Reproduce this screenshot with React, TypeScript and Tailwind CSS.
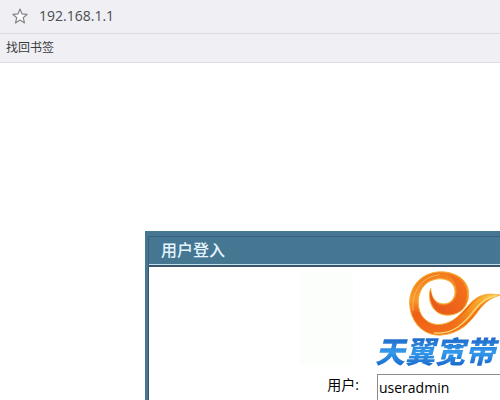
import { useState } from "react";

function AddressBar() {
  return (
    <header className="border-b border-[#dcdce2] bg-[#efeff4]">
      <div className="flex h-[34px] items-center gap-[7px] border-b border-[#dadae0] pb-px pl-2">
        <button type="button" aria-label="收藏" className="flex size-6 shrink-0 items-center justify-center">
          <svg
            viewBox="0 0 16 16"
            className="size-4"
            fill="#fcfcfc"
            stroke="#85858a"
            strokeWidth="1.2"
            strokeLinejoin="round"
          >
            <path d="M8 1l2 4.9 5.2.4-4 3.4 1.3 5.2L8 12.1l-4.5 2.8 1.3-5.2-4-3.4L6 5.9z" />
          </svg>
        </button>
        <input
          aria-label="地址"
          defaultValue="192.168.1.1"
          className="min-w-0 flex-1 bg-transparent text-sm text-[#4b4b50] outline-none"
        />
      </div>
      <nav className="flex h-7 items-center pl-1.5">
        <a href="#bookmarks" className="text-xs text-[#3c3c40]">
          找回书签
        </a>
      </nav>
    </header>
  );
}

function Brand() {
  return (
    <div className="flex h-[104px] pl-[151px]">
      <div className="mt-1.5 mr-5 h-[92px] w-[53px] shrink-0 bg-[#fcfefb]" />
      <div className="flex flex-col">
        <svg viewBox="0 4 285 212" className="ml-8 h-[71px] w-[95px] shrink-0" aria-hidden="true">
          <defs>
            <linearGradient id="flame" gradientUnits="userSpaceOnUse" x1="100" y1="18" x2="120" y2="208">
              <stop offset="0" stopColor="#f27a1c" />
              <stop offset="0.4" stopColor="#f79a2c" />
              <stop offset="0.62" stopColor="#ee5e16" />
              <stop offset="1" stopColor="#f2701a" />
            </linearGradient>
            <linearGradient id="tail" gradientUnits="userSpaceOnUse" x1="110" y1="200" x2="270" y2="90">
              <stop offset="0" stopColor="#f0681a" stopOpacity="0" />
              <stop offset="0.5" stopColor="#f58a1c" />
              <stop offset="1" stopColor="#fcc840" />
            </linearGradient>
            <linearGradient id="hook" gradientUnits="userSpaceOnUse" x1="75" y1="120" x2="185" y2="50">
              <stop offset="0" stopColor="#e8561c" />
              <stop offset="1" stopColor="#f4731a" />
            </linearGradient>
          </defs>
          <path
            fill="url(#flame)"
            stroke="#f6b13c"
            strokeWidth="3"
            d="M77 68C66 95 78 148 128 148C168 148 192 118 191 82C189 40 150 17 104 18C50 20 12 62 14 115C17 170 55 209 105 208C165 205 195 170 220 135C240 108 260 95 285 88C245 80 222 88 200 108C170 140 145 178 95 176C60 172 40 145 40 110C40 65 70 38 108 39C135 40 152 58 150 82C147 104 132 116 112 114C92 112 78 95 77 68Z"
          />
          <path
            fill="url(#hook)"
            d="M77 72C70 98 82 142 128 143C164 143 186 116 186 82C184 50 158 28 124 25C148 36 158 60 154 84C150 108 134 120 112 119C92 117 80 98 77 72Z"
          />
          <path
            fill="url(#tail)"
            d="M105 205C162 202 190 168 216 132C236 106 258 94 280 88C246 83 224 92 204 111C174 144 148 180 98 180Z"
          />
          <path
            fill="none"
            stroke="#fddb7c"
            strokeWidth="4"
            strokeLinecap="round"
            d="M88 201C145 208 180 170 208 133C228 108 245 95 274 89"
          />
          <path
            fill="none"
            stroke="#fbb650"
            strokeWidth="3"
            strokeLinecap="round"
            d="M24 134C18 82 48 32 103 27"
          />
        </svg>
        <span className="-mt-0.5 bg-linear-to-b from-[#1c62c4] via-[#359aec] to-[#1763c6] bg-clip-text pl-0.5 text-[30px] leading-8 font-black whitespace-nowrap text-transparent italic">
          天翼宽带
        </span>
      </div>
    </div>
  );
}

export default function App() {
  const [user, setUser] = useState("useradmin");
  return (
    <div className="flex min-h-screen flex-col overflow-hidden bg-white font-['Open_Sans','Noto_Sans_CJK_SC',sans-serif]">
      <AddressBar />
      <main className="flex flex-1 flex-col pt-42 pl-[145px]">
        <section className="flex flex-1 flex-col border-t-[5px] border-l-[3px] border-[#457692]">
          <h1 className="border-t border-l border-b-2 border-t-[#3b5f80] border-b-[#38556b] border-l-[#3b5f80] bg-[#457692]">
            <span className="flex h-7 items-center border-b border-[#c4dfee] pb-0.5 pl-3 text-base font-medium text-[#e4f5ff]">
              用户登入
            </span>
          </h1>
          <form className="flex-1 border-l border-[#38556b]">
            <Brand />
            <div className="flex items-center pt-[3px]">
              <label htmlFor="user" className="w-[228px] pr-[18px] pb-1.5 text-right text-sm text-black">
                用户:
              </label>
              <input
                id="user"
                value={user}
                onChange={(e) => setUser(e.target.value)}
                className="h-[27px] min-w-0 flex-1 border border-r-0 border-[#8c8c8c] bg-white pl-px text-sm text-black outline-none"
              />
            </div>
          </form>
        </section>
      </main>
    </div>
  );
}
